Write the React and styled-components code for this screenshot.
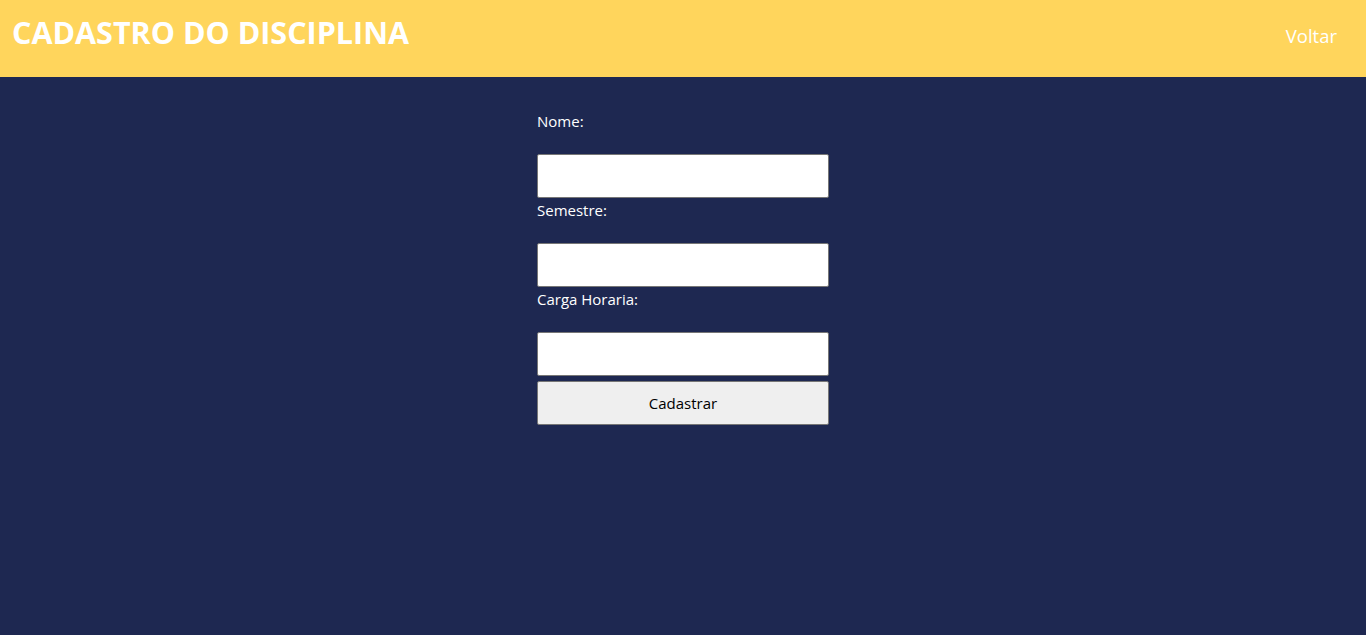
import React from "react";
import styled, { createGlobalStyle } from "styled-components";

const Global = createGlobalStyle`
  html, body { margin: 0; padding: 0; height: 100%; }
  body {
    background: #1e2851;
    font-family: "Open Sans", "Noto Sans", sans-serif;
  }
  #root { min-height: 100vh; }
`;

const Header = styled.header`
  height: 77px;
  background: #ffd55c;
  display: flex;
  align-items: center;
  justify-content: space-between;
  padding: 0 29px 0 12px;
  box-sizing: border-box;
`;

const Title = styled.h1`
  margin: 0;
  color: #fff;
  font-size: 30.5px;
  font-weight: 700;
  letter-spacing: 0;
  padding-bottom: 13px;
`;

const Back = styled.a`
  color: #fff;
  font-size: 18.5px;
  text-decoration: none;
  cursor: pointer;
  padding-bottom: 7px;
`;

const Main = styled.main`
  display: flex;
  justify-content: center;
  padding-top: 34px;
`;

const Form = styled.form`
  width: 292px;
  display: flex;
  flex-direction: column;
`;

const Label = styled.label`
  color: #fff;
  font-size: 15px;
  line-height: 21px;
  margin-bottom: 22px;
  margin-top: ${(p) => (p.$first ? "0" : "2px")};
`;

const Input = styled.input`
  height: 44px;
  box-sizing: border-box;
  border: 1px solid #767676;
  border-radius: 2px;
  background: #fff;
  padding: 0 8px;
  font-size: 15px;
  font-family: inherit;
`;

const Button = styled.button`
  margin-top: 5px;
  height: 44px;
  box-sizing: border-box;
  border: 1px solid #767676;
  border-radius: 2px;
  background: #efefef;
  color: #000;
  font-family: inherit;
  font-size: 15px;
  cursor: pointer;
`;

export default function App() {
  return (
    <>
      <Global />
      <Header>
        <Title>CADASTRO DO DISCIPLINA</Title>
        <Back>Voltar</Back>
      </Header>
      <Main>
        <Form onSubmit={(e) => e.preventDefault()}>
          <Label $first>Nome:</Label>
          <Input type="text" />
          <Label>Semestre:</Label>
          <Input type="text" />
          <Label>Carga Horaria:</Label>
          <Input type="text" />
          <Button type="submit">Cadastrar</Button>
        </Form>
      </Main>
    </>
  );
}
